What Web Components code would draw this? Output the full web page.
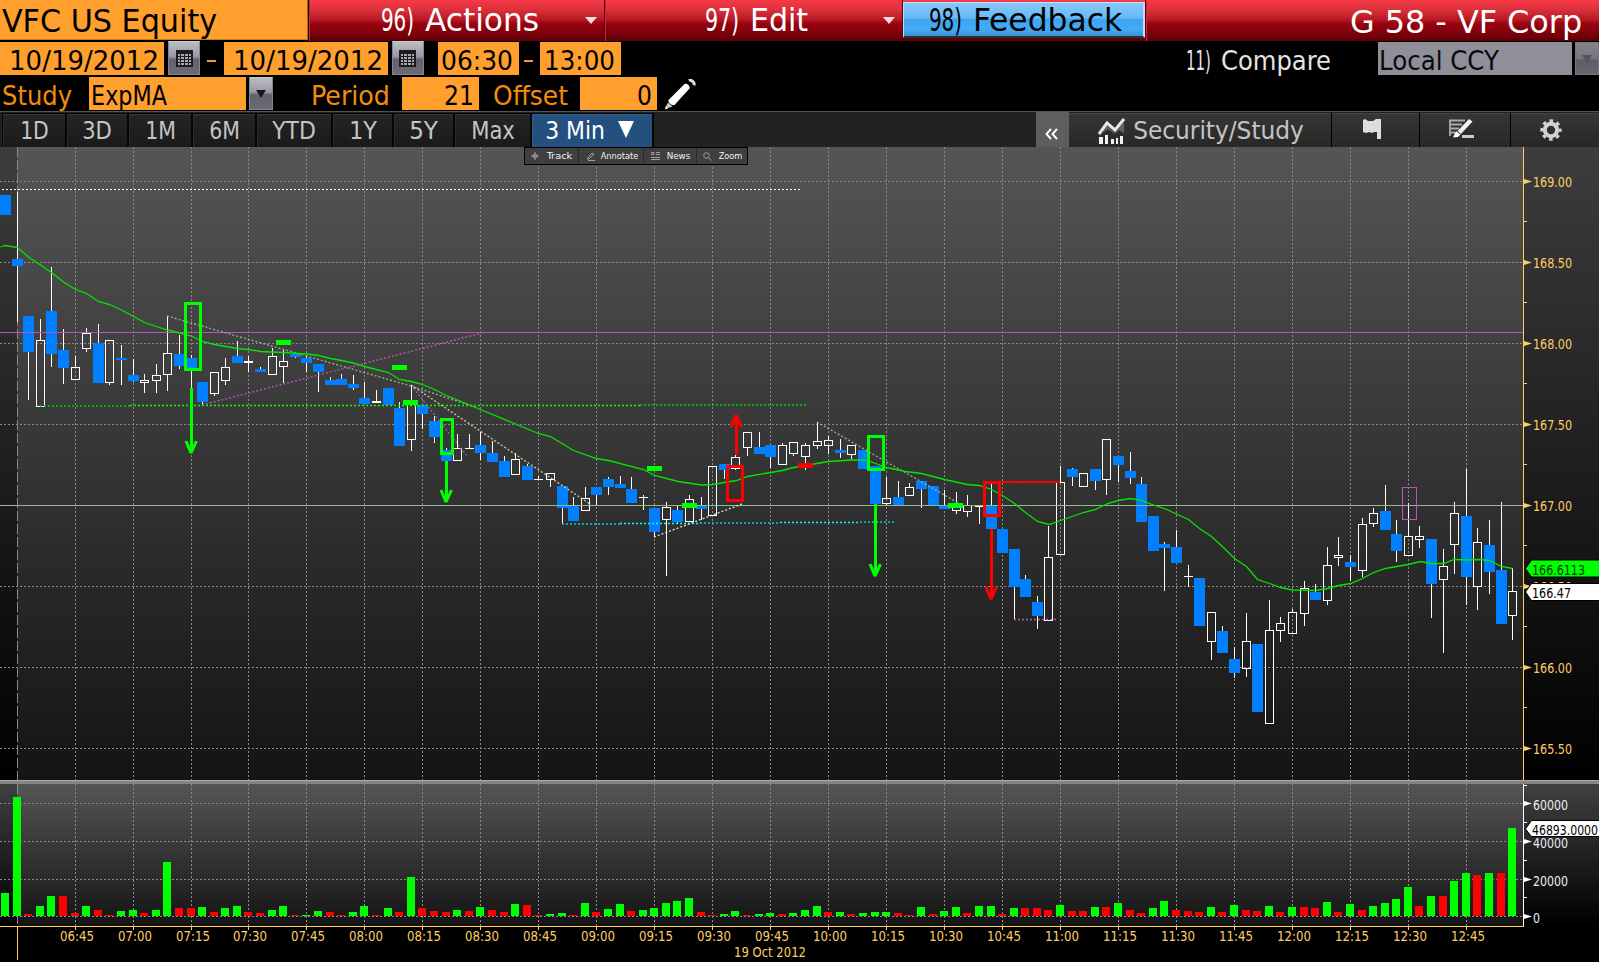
<!DOCTYPE html>
<html lang="en">
<head>
<meta charset="utf-8">
<title>VFC US Equity</title>
<style>
    body {
        margin: 0;
        width: 1599px;
        height: 962px;
        overflow: hidden;
        background: #000;
        font-family: "DejaVu Sans Condensed", "DejaVu Sans", sans-serif;
    }
</style>
</head>
<body>
<terminal-screen></terminal-screen>

<script>
// Text squeezed to a fixed width, the way the terminal font sets it
class FitText extends HTMLElement {

    constructor() {
        super()
        this.shadow = this.attachShadow({ mode: 'open' })
    }

    connectedCallback() {
        const w = +this.getAttribute('w')
        const size = +this.getAttribute('size')
        const h = Math.round(size * 1.2)
        const pad = size * 0.035
        this.shadow.innerHTML =
      /*html*/`
        <style>
            :host{ display:block; flex:none; width:${w}px; height:${h}px; }
            svg{ display:block; overflow:visible; }
            text{ fill:currentColor; white-space:pre; }
        </style>
        <svg width="${w}" height="${h}"><text x="${-pad}" y="${Math.round(size * 0.97)}" font-size="${size}"
            textLength="${w + pad * 2}" lengthAdjust="spacingAndGlyphs">${this.textContent}</text></svg>
      `
    }
}
customElements.define('fit-text', FitText)

class TitleBar extends HTMLElement {

    constructor() {
        super()
        this.shadow = this.attachShadow({ mode: 'open' })
    }

    connectedCallback() {
        this.shadow.innerHTML =
      /*html*/`
        <style>
            :host{ display:flex; height:41px; background:#000; color:#fff; }
            div{ box-sizing:border-box; display:flex; height:41px; }
            .security{
                width:308px; height:40px; margin-right:1px; padding:1px 0 0 3px;
                background:#ff9f2d; color:#000;
                border-right:1px solid #a96518; border-bottom:1px solid #c87c22;
            }
            .red{
                background:linear-gradient(#f93a47 0, #d8303b 25%, #b81824 48%, #960410 58%, #7c000a 82%, #5c0005 100%);
                border-right:1px solid #5a0008;
                border-left:1px solid #d02733;
            }
            .red fit-text + fit-text{ margin-left:13px; }
            .actions{ width:296px; padding:0 0 0 72px; }
            .edit{ width:298px; padding:0 0 0 100px; }
            .arrow{ width:12px; height:7px; margin-top:17px; }
            .actions .arrow{ margin-left:47px; }
            .edit .arrow{ margin-left:76px; }
            .feedback{ width:243px; padding:2px 0 0 0; border-left:0; }
            .feedback div{
                width:242px; height:36px; padding:0 0 0 26px; color:#000;
                background:linear-gradient(#86c8fa 0, #66b9f8 45%, #3fa5f1 50%, #45aaf4 80%, #3b90d4 100%);
                border:1px solid #bfe0fa; border-bottom:2px solid #23303e; border-right:2px solid #c8dcf0;
            }
            .feedback fit-text{ margin-top:-3px; }
            .name{ flex:1; justify-content:flex-end; padding:2px 18px 0 0; border-right:0; }
        </style>
        <div class="security"><fit-text w="213" size="32">VFC US Equity</fit-text></div>
        <div class="red actions">
            <fit-text w="31" size="32">96)</fit-text><fit-text w="112" size="32">Actions</fit-text>
            <svg class="arrow" viewBox="0 0 12 7"><path d="M0 0h12l-6 7z" fill="#f6dede"/></svg>
        </div>
        <div class="red edit">
            <fit-text w="32" size="32">97)</fit-text><fit-text w="56" size="32">Edit</fit-text>
            <svg class="arrow" viewBox="0 0 12 7"><path d="M0 0h12l-6 7z" fill="#f6dede"/></svg>
        </div>
        <div class="red feedback"><div>
            <fit-text w="31" size="32">98)</fit-text><fit-text w="147" size="32">Feedback</fit-text>
        </div></div>
        <div class="red name"><fit-text w="230" size="32">G 58 - VF Corp</fit-text></div>
      `
    }
}
customElements.define('title-bar', TitleBar)

class OrangeField extends HTMLElement {

    constructor() {
        super()
        this.shadow = this.attachShadow({ mode: 'open' })
        this.shadow.innerHTML =
      /*html*/`
        <style>
            :host{
                box-sizing:border-box; display:flex; flex:none; height:33px; padding-top:2px;
                background:#ff9f2d; color:#000;
            }
        </style>
        <slot></slot>
      `
    }
}
customElements.define('orange-field', OrangeField)

class IconButton extends HTMLElement {

    constructor() {
        super()
        this.shadow = this.attachShadow({ mode: 'open' })
    }

    connectedCallback() {
        const calendar = `<svg width="17" height="17" viewBox="0 0 17 17" shape-rendering="crispEdges">
            <path d="M0 0h17v17H0z" fill="#1b1b20"/>
            <path d="M2 4h2v2H2zM5 4h3v2H5zM9 4h3v2H9zM13 4h2v2h-2zM2 7h2v2H2zM5 7h3v2H5zM9 7h3v2H9zM13 7h2v2h-2zM2 10h2v2H2zM5 10h3v2H5zM9 10h3v2H9zM13 10h2v2h-2zM2 13h2v2H2zM5 13h3v2H5zM9 13h3v2H9zM13 13h2v2h-2z" fill="#a9a9b2"/></svg>`
        const down = `<svg width="10" height="8" viewBox="0 0 10 8"><path d="M0 0h10L5 8z" fill="currentColor"/></svg>`
        this.shadow.innerHTML =
      /*html*/`
        <style>
            :host{
                box-sizing:border-box; display:flex; flex:none; align-items:center; justify-content:center;
                color:#17171b;
                background:linear-gradient(#bcbcc3 0, #9a9aa3 45%, #62626c 55%, #6b6b76 100%);
                border:1px solid #85858f; border-top-color:#c9c9d0;
            }
            :host([muted]){
                color:#55555d;
                background:linear-gradient(#85858d, #74747c 50%, #5e5e67 55%, #66666f);
                border-color:#777780;
            }
        </style>
        ${this.getAttribute('icon') === 'calendar' ? calendar : down}
      `
    }
}
customElements.define('icon-button', IconButton)

class RangeRow extends HTMLElement {

    constructor() {
        super()
        this.shadow = this.attachShadow({ mode: 'open' })
    }

    connectedCallback() {
        this.shadow.innerHTML =
      /*html*/`
        <style>
            :host{ box-sizing:border-box; display:flex; height:35px; padding-top:1px; color:#ff9f2d; }
            .date{ width:164px; padding-left:10px; }
            icon-button{ width:32px; height:34px; margin:-1px 0 0 4px; }
            .dash{ width:9px; height:2px; margin:18px 0 0 7px; background:#f99a28; }
            .second{ margin-left:8px; }
            .time{ width:81px; padding-left:4px; }
            .from{ margin-left:14px; }
            .to{ margin-left:7px; padding-left:5px; }
            .short{ margin-left:5px; }
            .compare{ display:flex; gap:12px; margin:2px 0 0 566px; color:#e4e4e4; }
            .currency{
                box-sizing:border-box; width:195px; height:33px; margin-left:47px; padding:2px 0 0 2px;
                background:#8f8f99; color:#0a0a0c;
            }
            .drop{ width:24px; height:33px; margin:0 0 0 3px; }
        </style>
        <orange-field class="date"><fit-text w="148" size="27">10/19/2012</fit-text></orange-field>
        <icon-button icon="calendar"></icon-button>
        <div class="dash"></div>
        <orange-field class="date second"><fit-text w="148" size="27">10/19/2012</fit-text></orange-field>
        <icon-button icon="calendar"></icon-button>
        <orange-field class="time from"><fit-text w="70" size="27">06:30</fit-text></orange-field>
        <div class="dash short"></div>
        <orange-field class="time to"><fit-text w="69" size="27">13:00</fit-text></orange-field>
        <div class="compare"><fit-text w="23" size="27">11)</fit-text><fit-text w="108" size="27">Compare</fit-text></div>
        <div class="currency" style="margin-left:48px"><fit-text w="118" size="27">Local CCY</fit-text></div>
        <icon-button class="drop" muted></icon-button>
      `
    }
}
customElements.define('range-row', RangeRow)

class StudyRow extends HTMLElement {

    constructor() {
        super()
        this.shadow = this.attachShadow({ mode: 'open' })
    }

    connectedCallback() {
        this.shadow.innerHTML =
      /*html*/`
        <style>
            :host{ box-sizing:border-box; display:flex; height:35px; padding:1px 0 0 3px; color:#f28d0d; }
            .label{ margin-top:2px; }
            .study{ width:157px; margin-left:18px; padding-left:3px; }
            icon-button{ width:24px; height:33px; margin-left:3px; }
            .period{ margin-left:39px; }
            .num{ width:77px; margin-left:13px; justify-content:flex-end; padding-right:6px; }
            .offset{ margin-left:15px; }
            .pencil{ margin:2px 0 0 8px; }
        </style>
        <fit-text class="label" w="68" size="27">Study</fit-text>
        <orange-field class="study"><fit-text w="74" size="27">ExpMA</fit-text></orange-field>
        <icon-button></icon-button>
        <fit-text class="label period" w="77" size="27">Period</fit-text>
        <orange-field class="num"><fit-text w="28" size="27">21</fit-text></orange-field>
        <fit-text class="label offset" w="73" size="27">Offset</fit-text>
        <orange-field class="num"><fit-text w="13" size="27">0</fit-text></orange-field>
        <svg class="pencil" width="31" height="31" viewBox="0 0 31 31">
            <path d="M3.500 21L19.500 5c2.500-1.500 6 2 5 4.500L9.500 26c-2.500 1-7-2.500-6-5z" fill="#fff"/>
            <path d="M3 23.500l4.500 4-6 2L0 29z" fill="#c8c8c8"/>
            <path d="M0 30.500l1-3 2 2z" fill="#fff"/>
            <path d="M24 1.800c2-1.500 6 1.500 5 4.500" fill="none" stroke="#ddd" stroke-width="3"/>
        </svg>
      `
    }
}
customElements.define('study-row', StudyRow)

class PeriodBar extends HTMLElement {

    constructor() {
        super()
        this.shadow = this.attachShadow({ mode: 'open' })
    }

    connectedCallback() {
        // label, button width, space before the text, text width
        const periods = [
            ['1D', 62, 18, 27], ['3D', 60, 16, 28], ['1M', 62, 17, 29], ['6M', 62, 17, 29],
            ['YTD', 74, 16, 42], ['1Y', 59, 17, 26], ['5Y', 59, 16, 27], ['Max', 75, 17, 42],
        ]
        this.shadow.innerHTML =
      /*html*/`
        <style>
            :host{
                box-sizing:border-box; display:flex; height:36px; padding:1px 0 0 2px;
                border-top:1px solid #555; background:#212121; color:#c4c4c4;
            }
            .periods{ display:flex; gap:2px; padding:1px 2px 1px 1px; background:#050505; }
            .b{
                box-sizing:border-box; display:flex; height:33px;
                background:linear-gradient(#252525, #1a1a1a);
                border-top:1px solid #383838; border-left:1px solid #2c2c2c;
            }
            .on{ width:120px; padding:0 0 0 13px; background:#23507f; border-color:#2d5f95; color:#fff; }
            .on svg{ margin:6px 0 0 14px; }
            .tools{ display:flex; gap:1px; margin-left:auto; background:#000; }
            .fold{ box-sizing:border-box; width:33px; height:35px; padding:13px 0 0 9px; margin-top:-1px; background:#5e5e5e; }
            .t{
                box-sizing:border-box; display:flex; height:34px; align-items:center; justify-content:center;
                background:linear-gradient(#363636, #272727); border-top:1px solid #444;
            }
            .sec{ width:262px; padding-left:29px; margin-left:-1px; justify-content:flex-start; align-items:flex-start; }
            .sec svg{ margin-top:4px; }
            .sec fit-text{ margin:1px 0 0 8px; }
        </style>
        <div class="periods">
            ${periods.map(([t, w, pad, tw]) => `<div class="b" style="width:${w}px;padding-left:${pad - 1}px"><fit-text w="${tw}" size="25">${t}</fit-text></div>`).join('')}
            <div class="b on"><fit-text w="58" size="25">3 Min</fit-text><svg width="16" height="17"><path d="M0 0h16L8 17z" fill="#fff"/></svg></div>
        </div>
        <div class="tools">
            <div class="fold"><svg width="13" height="12" viewBox="0 0 13 12"><path d="M6 1L1.500 6 6 11M12 1L7.500 6l4.500 5" fill="none" stroke="#fff" stroke-width="1.900"/></svg></div>
            <div class="t sec">
                <svg width="28" height="27" viewBox="0 0 28 27">
                    <path d="M1 16L9 5l8 7L26 1" fill="none" stroke="#e6e6e6" stroke-width="3"/>
                    <path d="M1 17l8-9 8 7 9-11v11l-5-3-4 4-7-5-9 6z" fill="#999" opacity=".5"/>
                    <path d="M1 19h4v7H1zM7 17h3v9H7zM13 21h3v5h-3zM18 20h2v6h-2zM22 18h3v8h-3z" fill="#f2f2f2"/>
                </svg>
                <fit-text w="169" size="25">Security/Study</fit-text>
            </div>
            <div class="t" style="width:87px;padding:0 7px 2px 0">
                <svg width="18" height="21" viewBox="0 0 18 21"><path d="M0 1l2-1 3 2h5l3-2h5v20h-4v-7h-3l-2 1-3-1-3 1-3-1z" fill="#dedede"/></svg>
            </div>
            <div class="t" style="width:90px;padding-bottom:3px">
                <svg width="26" height="20" viewBox="0 0 26 20" style="margin-right:6px">
                    <path d="M0 1.500h16M1 5.500h12M1 9.500h9M1 13.500h5M1 1v16" stroke="#aaa" stroke-width="1.800" fill="none"/>
                    <path d="M20 0l3.500 2.500L12 15l-3.500-3z" fill="#f2f2f2"/><path d="M7 12l4.500 3.500L9 18l-5 .5z" fill="#fff"/>
                    <path d="M13 17.500h12" stroke="#ccc" stroke-width="3"/>
                </svg>
            </div>
            <div class="t" style="width:88px;padding:0 8px 2px 0">
                <svg width="24" height="22" viewBox="-12 -11 24 22">
                    <circle r="6.200" fill="none" stroke="#d2d2d2" stroke-width="4"/>
                    <circle r="9.200" fill="none" stroke="#d2d2d2" stroke-width="3" stroke-dasharray="3.613 3.613" stroke-dashoffset="1.800"/>
                </svg>
            </div>
        </div>
      `
    }
}
customElements.define('period-bar', PeriodBar)

// Floating strip over the top edge of the price pane
class ChartTools extends HTMLElement {

    constructor() {
        super()
        this.shadow = this.attachShadow({ mode: 'open' })
    }

    connectedCallback() {
        this.shadow.innerHTML =
      /*html*/`
        <style>
            :host{
                position:absolute; left:524px; top:0;
                box-sizing:border-box; display:flex; width:224px; height:18px;
                background:#3f3f3f; border:1px solid #000; color:#f0f0f0;
            }
            div{ box-sizing:border-box; display:flex; align-items:flex-start; border-right:1px solid #2a2a2a; padding-top:2px; }
            div:last-child{ border:0; }
            svg{ margin-top:2px; fill:none; stroke:#a0a0a0; stroke-width:1; }
        </style>
        <div style="width:54px;padding-left:6px">
            <svg width="8" height="8"><path d="M4 0v8M0 4h8"/><circle cx="4" cy="4" r="2"/></svg>
            <fit-text style="margin-left:8px" w="25" size="9.500">Track</fit-text>
        </div>
        <div style="width:65px;padding-left:7px">
            <svg width="9" height="9"><path d="M1 7l5-6 2 1-5 5zM2 8.500h7"/></svg>
            <fit-text style="margin-left:6px" w="37" size="9.500">Annotate</fit-text>
        </div>
        <div style="width:53px;padding-left:7px">
            <svg width="9" height="8"><path d="M0 .5h3v2H0zM5 .5h4M5 2.500h4M0 5.500h9M0 7.500h9"/></svg>
            <fit-text style="margin-left:7px" w="23" size="9.500">News</fit-text>
        </div>
        <div style="flex:1;padding-left:6px">
            <svg width="9" height="9"><circle cx="3.500" cy="3.500" r="2.800"/><path d="M5.500 5.500L8.500 8.500"/></svg>
            <fit-text style="margin-left:7px" w="23" size="9.500">Zoom</fit-text>
        </div>
      `
    }
}
customElements.define('chart-tools', ChartTools)

// Column of the n-th three minute bar, 0 is 06:30
const barX = n => Math.floor(17.115 + 11.594 * n)

const rect = (x, y, w, h, fill) => `<rect x="${x}" y="${y}" width="${w}" height="${h}" fill="${fill}"/>`
const label = (x, y, w, text, fill) => `<text x="${x}" y="${y}" textLength="${w}" lengthAdjust="spacingAndGlyphs" fill="${fill}">${text}</text>`

// dashed quarter-hour lines, the session start gets a long dash
const timeGrid = (top, bottom) => {
    let s = `<path d="M17.500 ${top}V${bottom}" stroke="#8a8a8a" stroke-dasharray="10 3"/>`
    for (let n = 5; n < 130; n += 5) {
        s += `<path d="M${barX(n) + .5} ${top}V${bottom}" stroke="#8a8a8a" stroke-dasharray="2 2"/>`
    }
    return s
}

const chartStyle = `
    :host{ display:block; }
    svg{ display:block; shape-rendering:crispEdges; }
    text{ font-size:14px; }
    .soft{ shape-rendering:auto; }
`

// kind (b = filled, w = hollow), top, bottom, high, low; starts at 06:27
const candles = [
    'b 195 215 195 215', 'b 259 266 192 322', 'b 316 352 316 400', 'w 340 407 319 407', 'b 311 354 267 367',
    'b 350 368 329 384', 'w 367 380 356 380', 'w 333 349 328 352', 'b 343 383 324 383', 'w 340 383 340 385',
    'b 358 360 345 385', 'b 375 381 359 382', 'w 380 383 374 393', 'w 375 381 364 393', 'w 353 375 316 391',
    'b 354 366 335 369', 'b 358 370 355 388', 'b 382 402 382 405', 'w 372 394 372 396', 'w 367 381 358 385',
    'b 356 363 341 363', 'w 361 363 356 372', 'b 369 372 367 372', 'w 356 375 348 375', 'w 361 367 350 383',
    'b 354 357 354 358', 'b 358 363 356 372', 'b 364 372 364 392', 'b 380 385 377 385', 'b 379 385 374 385',
    'b 384 388 375 390', 'b 398 404 382 404', 'w 401 403 390 403', 'b 388 405 388 405', 'b 408 446 402 446',
    'w 402 440 385 451', 'b 405 414 405 429', 'b 421 437 416 443', 'b 450 461 448 461', 'w 448 461 434 461',
    'w 448 449 434 449', 'b 445 453 432 460', 'b 453 462 441 462', 'b 461 477 456 477', 'w 459 475 453 475',
    'b 466 480 464 480', 'w 479 480 476 480', 'w 473 480 473 487', 'b 486 508 486 524', 'b 505 521 497 521',
    'w 498 511 487 511', 'b 487 495 487 505', 'b 479 487 477 495', 'b 484 488 476 488', 'b 489 503 477 503',
    'w 497 498 495 510', 'b 508 532 508 537', 'w 507 520 502 576', 'b 510 522 506 524', 'w 499 522 495 522',
    'b 505 509 497 520', 'w 466 516 466 516', 'b 464 470 464 479', 'w 457 469 455 470', 'w 432 448 432 456',
    'b 447 454 432 454', 'b 445 457 445 468', 'w 445 465 443 465', 'w 442 454 442 456', 'w 445 457 443 470',
    'w 441 446 422 449', 'w 440 446 436 454', 'b 450 453 439 458', 'w 445 455 445 459', 'b 450 469 450 469',
    'b 466 504 466 504', 'w 498 504 477 505', 'b 497 505 481 505', 'w 487 496 483 496', 'b 481 489 481 508',
    'b 486 505 486 505', 'b 505 509 490 509', 'w 507 511 492 514', 'w 505 512 495 517', 'w 506 507 506 524',
    'b 505 529 482 529', 'b 529 553 529 553', 'b 549 587 549 620', 'b 579 597 575 597', 'b 602 616 596 629',
    'w 557 621 526 621', 'w 482 555 466 555', 'b 469 477 468 486', 'w 473 487 473 487', 'b 469 481 469 490',
    'w 439 480 439 495', 'b 456 465 456 482', 'b 471 478 452 484', 'b 484 522 477 522', 'b 516 551 516 551',
    'b 544 548 542 591', 'b 547 563 530 563', 'w 576 577 565 587', 'b 578 626 578 626', 'w 612 642 612 660',
    'b 631 653 626 653', 'b 659 673 647 678', 'w 641 669 613 677', 'b 644 712 644 712', 'w 630 724 600 724',
    'w 623 631 617 642', 'w 612 634 609 634', 'w 588 614 581 626', 'b 592 600 584 600', 'w 565 601 547 605',
    'w 555 558 537 566', 'b 562 567 555 581', 'w 524 571 518 577', 'w 513 524 508 527', 'b 511 530 485 530',
    'b 534 551 520 562', 'w 536 556 503 556', 'w 536 540 526 548', 'b 539 584 539 618', 'w 566 580 549 653',
    'w 513 545 502 574', 'b 516 577 469 605', 'w 542 587 528 610', 'b 545 572 520 594', 'b 570 624 502 624',
    'w 591 616 568 640',
]

const average = '0,246.5 5,245 17,247 28,256.5 40,264.5 51,272 63,281.5 75,289 86,293 98,301 109,304 121,309.5 ' +
    '133,316 144,322 156,326 167,329.5 179,332.5 191,335.5 202,341 214,344 225,346 237,348 248,349 260,351 ' +
    '283,352 306,353.5 318,355 330,358 341,360 353,362.5 364,366 388,372 399,379 411,381 422,384 434,389 446,395 ' +
    '480,409 538,433 550,436 573,450 596,458 608,460 643,469 654,475 678,481 701,484.5 712,484 736,480 747,476 ' +
    '782,470 793,467 828,461 851,459.5 865,459.5 875,463 886,467 905,471 921,473 944,479 967,484 979,485 991,489 ' +
    '1002,495 1014,503 1025,512 1037,521 1049,524 1060,520 1083,512 1095,509 1107,503 1118,500 1130,498 1141,500 ' +
    '1153,504.5 1165,508.5 1176,513.5 1188,519 1199,528 1211,536 1223,547 1234,558 1246,566 1257,579 1269,583 ' +
    '1280,587 1292,589.5 1315,590 1327,588 1338,585 1350,583 1362,578 1373,572 1385,568 1396,566 1408,564 1420,561 ' +
    '1431,563 1443,563 1454,559 1466,559.5 1478,559 1489,560 1501,566 1512,568'

class PriceChart extends HTMLElement {

    constructor() {
        super()
        this.shadow = this.attachShadow({ mode: 'open' })
    }

    connectedCallback() {
        this.shadow.innerHTML =
      /*html*/`
        <style>${chartStyle}</style>
        <svg width="1599" height="633" viewBox="0 147 1599 633">
            <defs>
                <linearGradient id="plot" x2="0" y2="1"><stop stop-color="#555"/><stop offset="1" stop-color="#141414"/></linearGradient>
                <linearGradient id="side" x2="0" y2="1"><stop stop-color="#3d3d3d"/><stop offset="1" stop-color="#000"/></linearGradient>
            </defs>
            ${rect(0, 147, 1599, 633, 'url(#side)')}
            ${rect(17, 147, 1506, 633, 'url(#plot)')}
            ${this.grid()}
            ${this.candles()}
            ${this.lines()}
            ${this.marks()}
            ${this.axis()}
        </svg>
      `
    }

    grid() {
        let s = timeGrid(147, 780)
        for (let y = 181; y < 780; y += 81) {
            s += `<path d="M0 ${y + .5}H1523" stroke="#8a8a8a" stroke-dasharray="2 2"/>`
        }
        return s
    }

    candles() {
        return candles.map((row, i) => {
            const x = barX(i - 1)
            const [kind, ...v] = row.split(' ')
            const [top, bottom, high, low] = v.map(Number)
            if (kind === 'b') {
                return rect(x, high, 1, low - high, '#fff') + rect(x - 5, top, 11, bottom - top, '#0080ff')
            }
            const wick = rect(x, high, 1, top - high, '#fff') + rect(x, bottom, 1, low - bottom, '#fff')
            if (bottom - top < 3) return wick + rect(x - 4, top, 9, bottom - top, '#fff')
            return wick + `<rect x="${x - 3.5}" y="${top + .5}" width="8" height="${bottom - top - 1}" fill="none" stroke="#fff"/>`
        }).join('')
    }

    lines() {
        // path, colour, opacity, width
        const dotted = [
            ['M2 189.500H800', '#fff', 1, 1],
            ['M40 406H130', '#00c800', .8, 2],
            ['M130 405.500H640', '#00ff00', 1, 1.5],
            ['M640 405H806', '#00c800', .8, 2],
            ['M167 316L411 386 475 407', '#a0c8a0', .8, 1.4],
            ['M202 405L482 333', '#c060c0', .8, 1.5],
            ['M411 385L467 456', '#c060c0', .8, 1.4],
            ['M411 385L590 504', '#f0e8a0', .8, 1.4],
            ['M562 524H620', '#00c8c8', .8, 2],
            ['M620 523.500H700', '#00ffff', 1, 1.4],
            ['M700 523H780', '#00c8c8', .8, 2],
            ['M780 522.500H860', '#00ffff', 1, 1.4],
            ['M860 522H895', '#00c8c8', .8, 2],
            ['M654 537L742 504', '#fff', .8, 1.4],
            ['M817 422L960 504', '#a0c8a0', .8, 1.4],
            ['M1014 619.500H1056', '#c060c0', .9, 1.5],
        ]
        return `<path d="M0 332.500H1523" stroke="#c050c0"/><path d="M0 505.500H1523" stroke="#8fbc8f"/>` +
            dotted.map(([d, c, o, w]) => `<path class="soft" d="${d}" fill="none" stroke="${c}" stroke-opacity="${o}" stroke-width="${w}" stroke-dasharray="2 2"/>`).join('') +
            `<polyline class="soft" points="${average}" transform="translate(.5 .5)" fill="none" stroke="#00e600" stroke-width="1.300"/>`
    }

    marks() {
        const green = '#00ff00'
        const red = '#ff0000'
        const box = (x, y, w, h, c) => `<rect x="${x + 1.5}" y="${y + 1.5}" width="${w - 3}" height="${h - 3}" fill="none" stroke="${c}" stroke-width="3"/>`
        // dir 1 points down, -1 points up
        const arrow = (x, from, tip, dir, c) => rect(x - 1, dir > 0 ? from : tip + 4, 3, Math.abs(tip - from) - 4, c) +
            `<path class="soft" d="M${x - 5} ${tip - 15 * dir}L${x} ${tip - 3 * dir}L${x + 5.5} ${tip - 15 * dir}" fill="none" stroke="${c}" stroke-width="3" stroke-linejoin="bevel"/>`
        return [
            box(184, 302, 18, 69, green), box(440, 418, 14, 37, green), box(867, 435, 18, 36, green),
            box(726, 465, 18, 37, red), box(983, 481, 18, 36, red), rect(1001, 481, 59, 2, red),
            '<rect x="1402.500" y="487.500" width="14" height="32" fill="none" stroke="#c050c0"/>',
            rect(276, 340, 15, 5, green), rect(392, 365, 15, 5, green), rect(403, 400, 15, 5, green),
            rect(647, 466, 15, 5, green), rect(682, 503, 15, 5, green), rect(948, 503, 15, 5, green),
            rect(798, 463, 15, 5, red),
            arrow(191, 388, 456, 1, green), arrow(446, 461, 505, 1, green), arrow(875, 504, 579, 1, green),
            arrow(991, 529, 602, 1, red), arrow(736, 455, 412, -1, red),
        ].join('')
    }

    axis() {
        const c = '#ffcc66'
        let s = rect(1523, 147, 1, 633, c)
        for (let n = 0; n < 8; n++) {
            const y = 181 + n * 81
            s += `<path class="soft" d="M1524 ${y - 2}l8 2.500-8 2.500z" fill="${c}"/>` + label(1533, y + 6, 39, (169 - n / 2).toFixed(2), c)
            if (n < 7) s += rect(1524, y + 40, 3, 1, c)
        }
        const tag = (y, fill) => `<path class="soft" d="M1525.500 ${y + 8.500}l6-8.500h70v17h-70z" fill="${fill}" stroke="#000"/>`
        return s + tag(560, '#00ff00') + label(1532, 575, 53, '166.6113', '#003c00') +
            tag(583.5, '#fff') + label(1532, 598, 39, '166.47', '#000')
    }
}
customElements.define('price-chart', PriceChart)

// bar heights in pixels, negative = down bar
const volumes = [
    23, 119, -2, 10, 20, -20, -3, 10, -6, -1, 5, 6, -3, 6, 54, -8, -8, 9, -4, 8, 10, -4, -3, 6, 10, -1, 1, 5, -4, -1,
    4, 10, -1, 8, -4, 39, -8, -5, -4, 6, -5, 9, -6, -4, 12, -11, -1, 2, 3, -1, 13, -4, 7, 12, -5, 6, 8, 13, 15, 18,
    -4, -1, 2, 5, -1, 2, 3, -2, 3, 6, 10, -4, 4, -2, 3, 4, 4, -3, -1, 9, -2, 5, 9, -3, 10, 10, -2, 8, -8, -8, -6,
    11, -5, -5, 9, -9, 13, -6, -3, 8, 15, -6, -5, -4, 9, -4, 11, -6, -5, 10, -4, 9, -9, -8, 14, -4, 12, -6, 10, 13,
    17, 29, -10, 20, -20, 35, 43, -41, 43, -43, 88,
]

class VolumeChart extends HTMLElement {

    constructor() {
        super()
        this.shadow = this.attachShadow({ mode: 'open' })
    }

    connectedCallback() {
        this.shadow.innerHTML =
      /*html*/`
        <style>${chartStyle}</style>
        <svg width="1599" height="182" viewBox="0 780 1599 182">
            <defs>
                <linearGradient id="plot" x2="0" y2="1"><stop stop-color="#555"/><stop offset="1" stop-color="#141414"/></linearGradient>
                <linearGradient id="side" x2="0" y2="1"><stop stop-color="#404040"/><stop offset="1" stop-color="#000"/></linearGradient>
            </defs>
            ${rect(0, 784, 1599, 142, 'url(#side)')}
            ${rect(17, 784, 1506, 142, 'url(#plot)')}
            ${rect(0, 780, 1599, 4, '#858585')}
            ${rect(0, 780, 1599, 1, '#aaa')}
            ${timeGrid(784, 926)}
            ${[803, 841, 879, 916].map(y => `<path d="M0 ${y + .5}H1523" stroke="#8a8a8a" stroke-dasharray="2 2"/>`).join('')}
            ${volumes.map((v, i) => rect(barX(i - 1) - 4, 916 - Math.abs(v), 8, Math.abs(v), v < 0 ? '#ff0000' : '#00ff00')).join('')}
            ${this.valueAxis()}
            ${this.timeAxis()}
        </svg>
      `
    }

    valueAxis() {
        let s = rect(1523, 784, 1, 142, '#fff')
        const rows = [[803, '60000', 35], [841, '40000', 35], [879, '20000', 35], [916, '0', 7]]
        rows.forEach(([y, text, w]) => {
            s += `<path class="soft" d="M1524 ${y - 2}l8 2.500-8 2.500z" fill="#fff"/>` + label(1533, y + 7, w, text, '#e8eef4')
        })
        s += [785, 822, 860, 897].map(y => rect(1524, y, 3, 1, '#fff')).join('')
        return s + '<path class="soft" d="M1525.500 829l6-8.500h70v16h-70z" fill="#fff" stroke="#000"/>' +
            label(1532, 835, 66, '46893.0000', '#000')
    }

    timeAxis() {
        const c = '#ffcc66'
        let s = rect(0, 926, 1524, 1, c) + rect(17, 926, 1, 34, c)
        for (let n = 5; n < 130; n += 5) {
            const t = 390 + n * 3
            const text = String(Math.floor(t / 60)).padStart(2, '0') + ':' + String(t % 60).padStart(2, '0')
            s += rect(barX(n), 927, 1, 3, c) + label(barX(n) - 15, 941, 34, text, c)
        }
        return s + label(734, 957, 72, '19 Oct 2012', c)
    }
}
customElements.define('volume-chart', VolumeChart)

class TerminalScreen extends HTMLElement {

    constructor() {
        super()
        this.shadow = this.attachShadow({ mode: 'open' })
    }

    connectedCallback() {
        this.shadow.innerHTML =
      /*html*/`
        <style>
            :host{ display:flex; flex-direction:column; width:1599px; height:962px; background:#000; }
            .pane{ position:relative; }
        </style>
        <title-bar></title-bar>
        <range-row></range-row>
        <study-row></study-row>
        <period-bar></period-bar>
        <div class="pane">
            <price-chart></price-chart>
            <chart-tools></chart-tools>
        </div>
        <volume-chart></volume-chart>
      `
    }
}
customElements.define('terminal-screen', TerminalScreen)
</script>
</body>
</html>
